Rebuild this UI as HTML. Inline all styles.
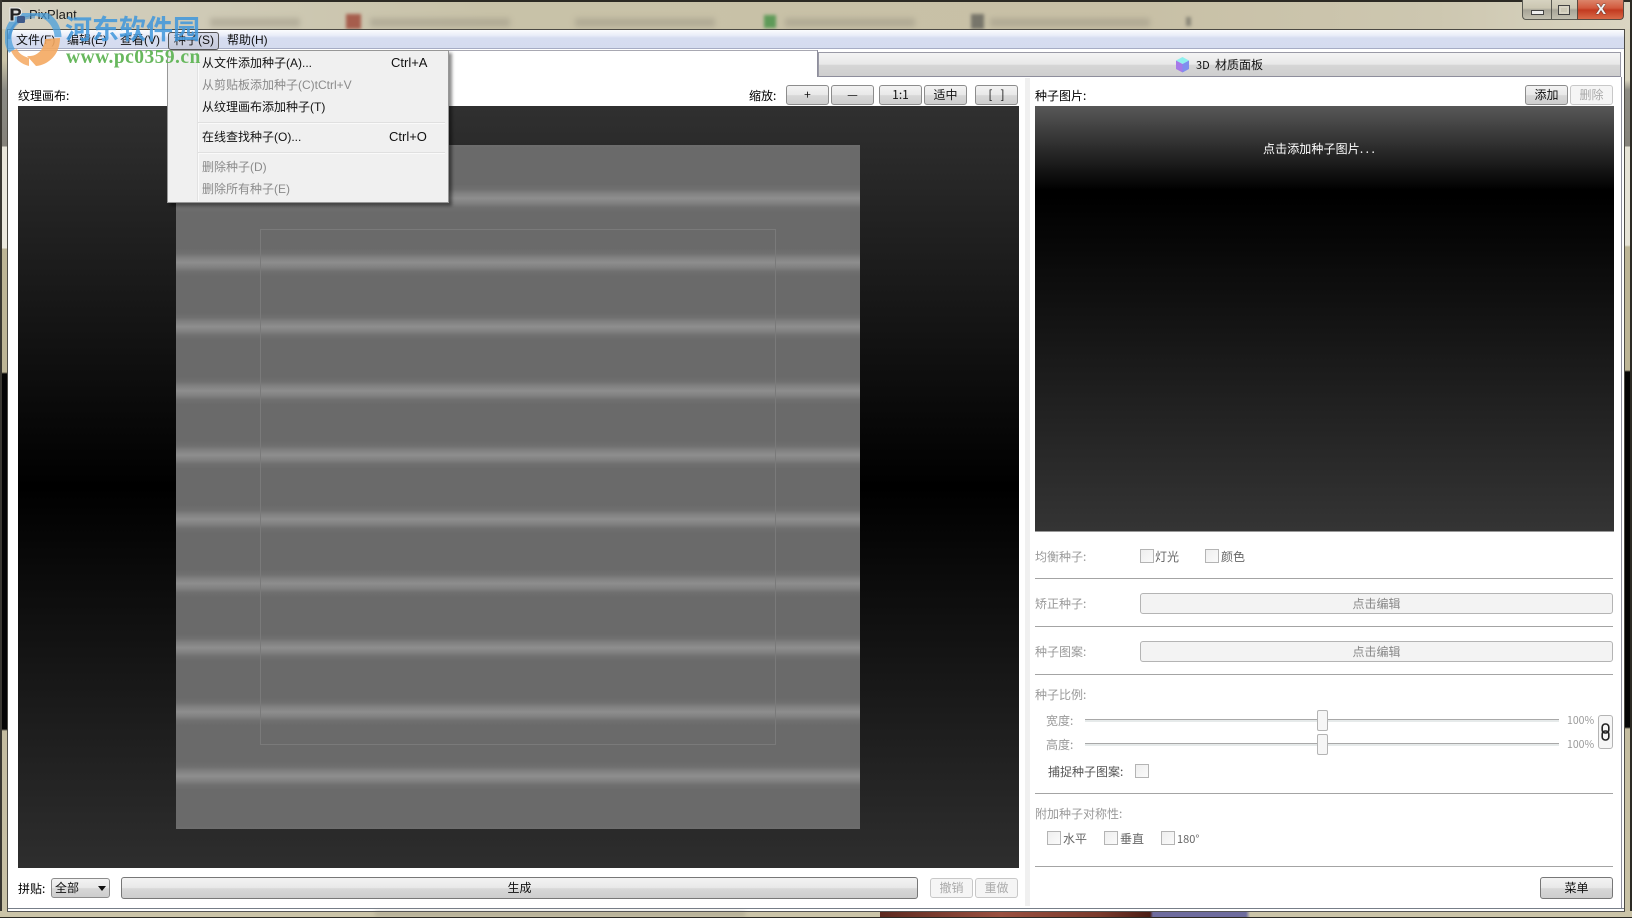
<!DOCTYPE html>
<html lang="zh"><head><meta charset="utf-8"><title>PixPlant</title>
<style>
html,body{margin:0;padding:0;width:1632px;height:918px;overflow:hidden;background:#cbc4a8}
body{position:relative;font:12px "WenQuanYi Zen Hei","Noto Sans CJK SC","Liberation Sans",sans-serif;color:#000}
div,span{position:absolute;box-sizing:border-box}
.t{white-space:nowrap;height:16px;line-height:16px;margin-top:1px}
.g{color:#999}
.m{font-family:"Liberation Sans","Noto Sans CJK SC",sans-serif;font-size:12px;color:#111;margin-top:0}
.s{font-size:13px}
.d{color:#8a8a8a}
.b{border:1px solid #8c8c8c;border-radius:3px;background:linear-gradient(#f3f3f3 0,#e8e8e8 50%,#d8d8d8 52%,#cdcdcd 100%);text-align:center;line-height:18px;color:#111;white-space:nowrap}
.bd{border-color:#c8c8c8;background:#f5f5f5;color:#aaa}
.e{border:1px solid #b4b4b4;border-radius:3px;background:#f3f3f3;text-align:center;line-height:19px;color:#888;left:1140px;width:473px;height:21px}
.hr{left:1035px;width:578px;height:1px;background:#a4a4a4}
.c{width:14px;height:14px;border:1px solid #b4b4b4;background:linear-gradient(135deg,#eee,#fafafa)}
.gr{left:1085px;width:474px;height:3px;background:linear-gradient(#a8a8a8 0,#a8a8a8 34%,#e6eaea 34%)}
.h{left:1317px;width:11px;height:21px;border:1px solid #b4b4b4;border-radius:2px;background:#f6f6f6}
.sep{left:198px;width:247px;height:2px;background:#e0e0e0;border-bottom:1px solid #fafafa}
.bl{filter:blur(3px);background:#9c9684;height:9px;top:18px;opacity:.5}
</style></head><body>

<!-- frame glass -->
<div style="left:0;top:0;width:8px;height:918px;background:linear-gradient(#cbc4a8 0,#cbc4a8 60px,#8a8a84 90px,#85827a 146px,#e9e6da 147px,#ece9de 248px,#bdb596 249px,#bdb596 372px,#050505 374px,#050505 729px,#c4bca0 731px,#c9c2a6 918px)"></div>
<div style="left:1624px;top:0;width:8px;height:918px;background:linear-gradient(#d8d3be 0,#d8d3be 80px,#8e8c84 90px,#85827a 146px,#e6e3d6 147px,#e6e3d6 245px,#bdb596 247px,#bdb596 370px,#050505 372px,#050505 727px,#c4bca0 729px,#c9c2a6 918px)"></div>
<div style="left:0;top:0;width:1632px;height:2px;background:#2c2a24;border-radius:6px 6px 0 0"></div>
<div style="left:0;top:2px;width:1632px;height:27px;background:linear-gradient(90deg,#d4d0c0 0,#c8c2a8 30%,#c8c0a6 70%,#cdc7b0 88%,#dad5c2 100%)"></div>
<div style="left:0;top:0;width:2px;height:918px;background:#3a3832"></div>
<div style="left:1630px;top:0;width:2px;height:918px;background:#2c2a24"></div>

<!-- blurred content behind title -->
<div class="bl" style="left:210px;width:90px"></div>
<div class="bl" style="left:370px;width:140px"></div>
<div class="bl" style="left:575px;width:140px"></div>
<div class="bl" style="left:785px;width:130px"></div>
<div class="bl" style="left:990px;width:160px"></div>
<div style="left:346px;top:14px;width:15px;height:15px;background:#a65d4c;filter:blur(1.500px)"></div>
<div style="left:764px;top:15px;width:12px;height:13px;background:#5e9a58;filter:blur(1.500px)"></div>
<div style="left:971px;top:14px;width:13px;height:15px;background:#77756a;filter:blur(1.500px)"></div>
<div style="left:1186px;top:17px;width:5px;height:9px;background:#8a8778;filter:blur(1.500px)"></div>

<span class="t" style="left:29px;top:6px;font:13px 'Liberation Sans',sans-serif;color:#1a1a1a;line-height:16px">PixPlant</span>

<!-- caption buttons -->
<div style="left:1522px;top:-1px;width:30px;height:21px;border:1px solid #5a5a52;border-top:0;border-right:0;border-radius:0 0 0 4px;background:linear-gradient(#d8d4c2,#cbc6b2 45%,#a8a598 55%,#c2bfb0)"></div>
<div style="left:1551px;top:-1px;width:27px;height:21px;border-left:1px solid #5a5a52;border-bottom:1px solid #5a5a52;background:linear-gradient(#d8d4c2,#cbc6b2 45%,#a8a598 55%,#c2bfb0)"></div>
<div style="left:1577px;top:-1px;width:47px;height:21px;border:1px solid #5a4a40;border-top:0;border-radius:0 0 4px 0;background:linear-gradient(#dd8a70,#d25a3e 45%,#c23a20 55%,#d96a48)"></div>
<div style="left:1531px;top:10px;width:13px;height:5px;background:#eee;border:1px solid #444"></div>
<div style="left:1558px;top:5px;width:12px;height:10px;border:1px solid #444;background:#ccc8b6;box-shadow:inset 0 0 0 2px #d8d4c4"></div>
<span class="t" style="left:1594px;top:1px;font:bold 15px 'Liberation Sans',sans-serif;color:#f2f2f2;text-shadow:0 0 1px #333,0 0 1px #333;line-height:16px;width:14px;text-align:center">X</span>

<!-- client -->
<div style="left:7px;top:29px;width:1618px;height:883px;background:#fff;border:1px solid #4c4a44;border-bottom:0"></div>
<div style="left:8px;top:908px;width:1616px;height:1px;background:#777e88"></div>
<div style="left:8px;top:909px;width:1616px;height:2px;background:#fff"></div>
<div style="left:0;top:911px;width:1632px;height:6px;background:linear-gradient(90deg,#cbc4a8 0,#cbc4a8 880px,#5e2a20 880px,#9a5040 1000px,#7a3a2c 1100px,#4a1c14 1150px,#6e6c9e 1153px,#6e6c9e 1246px,#cbc4a8 1250px)"></div>
<div style="left:375px;top:912px;width:370px;height:4px;background:#a09a86;filter:blur(2px);opacity:.6"></div>
<div style="left:0;top:917px;width:1632px;height:1px;background:#2c2a24"></div>
<div style="left:7px;top:911px;width:1618px;height:1px;background:#555"></div>

<!-- menu bar -->
<div style="left:8px;top:30px;width:1616px;height:19px;background:linear-gradient(#fbfcfe 0,#e9edf8 30%,#d6ddf0 45%,#d5dcef 100%);border-bottom:1px solid #a6acc4"></div>
<div style="left:168px;top:32px;width:51px;height:18px;border:1px solid #555;border-radius:3px;background:linear-gradient(#d8dcea,#c3c8da)"></div>
<span class="t m" style="left:16px;top:32px">文件(F)</span>
<span class="t m" style="left:67px;top:32px">编辑(E)</span>
<span class="t m" style="left:120px;top:32px">查看(V)</span>
<span class="t m" style="left:174px;top:32px">种子(S)</span>
<span class="t m" style="left:227px;top:32px">帮助(H)</span>

<!-- tabs -->
<div style="left:818px;top:52px;width:803px;height:25px;background:linear-gradient(#f4f4f4 0,#e8e8e8 50%,#d6d6d6 52%,#cfcfcf 100%);border:1px solid #9a9aa6;border-bottom:1px solid #8e8e9c"></div>
<div style="left:8px;top:50px;width:810px;height:1px;background:#a8a8b2"></div>
<div style="left:817px;top:50px;width:1px;height:27px;background:#8e8e9c"></div>
<div style="left:1621px;top:77px;width:1px;height:831px;background:#8e8e9c"></div>
<svg style="position:absolute;left:1175px;top:56px" width="15" height="17" viewBox="0 0 15 17"><path d="M7.500 1L14 4.500 7.500 8 1 4.500z" fill="#8ef0ee"/><path d="M1 4.500L7.500 8v8.500L1 13z" fill="#a67ae8"/><path d="M14 4.500L7.500 8v8.500L14 13z" fill="#7f8fee"/></svg>
<span class="t" style="left:1196px;top:56px;font-size:11px;color:#111">3D</span>
<span class="t" style="left:1215px;top:56px;color:#111">材质面板</span>

<!-- top labels -->
<span class="t" style="left:18px;top:87px">纹理画布:</span>
<span class="t" style="left:749px;top:87px">缩放:</span>
<div class="b" style="left:786px;top:85px;width:43px;height:20px">+</div>
<div class="b" style="left:831px;top:85px;width:43px;height:20px">—</div>
<div class="b" style="left:879px;top:85px;width:43px;height:20px">1:1</div>
<div class="b" style="left:924px;top:85px;width:43px;height:20px">适中</div>
<div class="b" style="left:975px;top:85px;width:43px;height:20px">[ &nbsp;&nbsp;]</div>
<span class="t" style="left:1035px;top:87px">种子图片:</span>
<div class="b" style="left:1525px;top:85px;width:43px;height:20px">添加</div>
<div class="b bd" style="left:1570px;top:85px;width:43px;height:20px">删除</div>

<!-- canvas -->
<div style="left:18px;top:106px;width:1001px;height:762px;background:linear-gradient(#303030 0,#000 50%,#2e2e2e 100%)"></div>
<div style="left:176px;top:145px;width:684px;height:684px;overflow:hidden;background:#6b6b6b">
  <div style="left:0;top:-43px;width:684px;height:780px;background:repeating-linear-gradient(#6a6a6a 0,#6a6a6a 18px,#707070 23px,#808080 27px,#8e8e8e 32px,#808080 37px,#707070 41px,#6a6a6a 46px,#6a6a6a 64.2px)"></div>
  <div style="left:84px;top:84px;width:516px;height:516px;border:1px solid #7a7a7a"></div>
</div>

<!-- splitter -->
<div style="left:1025px;top:78px;width:5px;height:828px;background:#f0f0f0"></div>

<!-- preview -->
<div style="left:1035px;top:106px;width:579px;height:426px;background:linear-gradient(#585858 0,#000 84px,#000 90px,#343434 100%);border-bottom:1px solid #999"></div>
<span class="t" style="left:1263px;top:140px;color:#fff;letter-spacing:.1px">点击添加种子图片<span style="position:static;letter-spacing:2.500px">...</span></span>

<!-- dropdown -->
<div style="left:167px;top:50px;width:282px;height:153px;background:#f0f0f0;border:1px solid #979797;box-shadow:3px 3px 3px rgba(0,0,0,.45)"></div>
<div style="left:197px;top:52px;width:1px;height:149px;background:#e2e2e2"></div>
<div style="left:198px;top:52px;width:1px;height:149px;background:#fafafa"></div>
<span class="t m" style="left:202px;top:55px">从文件添加种子(A)...</span><span class="t m s" style="left:391px;top:55px">Ctrl+A</span>
<span class="t m d" style="left:202px;top:77px">从剪贴板添加种子(C)tCtrl+V</span>
<span class="t m" style="left:202px;top:99px">从纹理画布添加种子(T)</span>
<div class="sep" style="top:122px"></div>
<span class="t m" style="left:202px;top:129px">在线查找种子(O)...</span><span class="t m s" style="left:389px;top:129px">Ctrl+O</span>
<div class="sep" style="top:152px"></div>
<span class="t m d" style="left:202px;top:159px">删除种子(D)</span>
<span class="t m d" style="left:202px;top:181px">删除所有种子(E)</span>

<!-- right panel -->
<span class="t g" style="left:1035px;top:548px">均衡种子:</span>
<div class="c" style="left:1140px;top:549px"></div><span class="t" style="left:1155px;top:548px;color:#666">灯光</span>
<div class="c" style="left:1205px;top:549px"></div><span class="t" style="left:1221px;top:548px;color:#666">颜色</span>
<div class="hr" style="top:578px"></div>
<span class="t g" style="left:1035px;top:595px">矫正种子:</span>
<div class="e" style="top:593px">点击编辑</div>
<div class="hr" style="top:626px"></div>
<span class="t g" style="left:1035px;top:643px">种子图案:</span>
<div class="e" style="top:641px">点击编辑</div>
<div class="hr" style="top:674px"></div>
<span class="t g" style="left:1035px;top:686px">种子比例:</span>
<span class="t g" style="left:1046px;top:712px">宽度:</span>
<div class="gr" style="top:719px"></div><div class="h" style="top:710px"></div>
<span class="t g" style="left:1567px;top:712px;font-size:10.500px">100%</span>
<span class="t g" style="left:1046px;top:736px">高度:</span>
<div class="gr" style="top:743px"></div><div class="h" style="top:734px"></div>
<span class="t g" style="left:1567px;top:736px;font-size:10.500px">100%</span>
<div style="left:1598px;top:715px;width:15px;height:34px;border:1px solid #b4b4b4;border-radius:3px;background:#f6f6f6"></div>
<svg style="position:absolute;left:1601px;top:723px" width="9" height="18" viewBox="0 0 9 18" fill="none" stroke="#222" stroke-width="1.600"><rect x="1.200" y="1" width="6.600" height="9" rx="3"/><rect x="1.200" y="8" width="6.600" height="9" rx="3"/></svg>
<span class="t" style="left:1048px;top:763px;color:#555">捕捉种子图案:</span>
<div class="c" style="left:1135px;top:764px"></div>
<div class="hr" style="top:793px"></div>
<span class="t g" style="left:1035px;top:805px">附加种子对称性:</span>
<div class="c" style="left:1047px;top:831px"></div><span class="t" style="left:1063px;top:830px;color:#666">水平</span>
<div class="c" style="left:1104px;top:831px"></div><span class="t" style="left:1120px;top:830px;color:#666">垂直</span>
<div class="c" style="left:1161px;top:831px"></div><span class="t" style="left:1177px;top:830px;color:#666;font-size:11px">180°</span>
<div class="hr" style="top:866px"></div>
<div class="b" style="left:1540px;top:877px;width:73px;height:22px;border-color:#777;line-height:20px">菜单</div>

<!-- bottom left -->
<span class="t" style="left:18px;top:880px">拼贴:</span>
<div class="b" style="left:51px;top:878px;width:59px;height:20px;text-align:left;padding-left:3px">全部</div>
<div style="left:98px;top:886px;width:0;height:0;border:4px solid transparent;border-top:5px solid #111;border-bottom:0"></div>
<div class="b" style="left:121px;top:877px;width:797px;height:22px;border-color:#777;line-height:20px">生成</div>
<div class="b bd" style="left:930px;top:878px;width:43px;height:20px">撤销</div>
<div class="b bd" style="left:975px;top:878px;width:43px;height:20px">重做</div>

<!-- watermark -->
<svg style="position:absolute;left:5px;top:13px" width="58" height="55" viewBox="0 0 58 55" fill="none"><path d="M7 38A25 25 0 1 1 53 24" stroke="#4a9fdc" stroke-width="7" opacity=".75"/><path d="M4 26A24 24 0 0 1 30 4" stroke="#2f86cc" stroke-width="3" opacity=".5"/><path d="M55 25C55 42 43 52 31 53L22 43C33 44 39 36 40 26z" fill="#f4a860" opacity=".9"/><path d="M6 38C10 46 16 51 24 53L24 45C18 43 14 41 12 36z" fill="#f4a860" opacity=".85"/></svg>
<span class="t" style="left:65px;top:7px;height:28px;line-height:28px;font:bold 27px 'Noto Sans CJK SC',sans-serif;color:#3f97dc;opacity:.85">河东软件园</span>
<span class="t" style="left:66px;top:46px;line-height:16px;font:bold 19.500px 'Liberation Serif',serif;color:#68b85e;letter-spacing:.45px">www.pc0359.cn</span>

<!-- title icon above watermark -->
<svg style="position:absolute;left:8px;top:7px" width="18" height="17" viewBox="0 0 18 17"><path d="M2 1h7c3 0 4.500 1.500 4.500 4s-2 4-4.500 4H6v5H2z" fill="#222" stroke="#eee" stroke-width="1"/><path d="M5.500 3.500h3c1.500 0 2 .7 2 1.500s-.6 1.500-2 1.500h-3z" fill="#ddd"/><rect x="9" y="9" width="8" height="7" rx="1.500" fill="#3e5a8a"/></svg>
</body></html>
